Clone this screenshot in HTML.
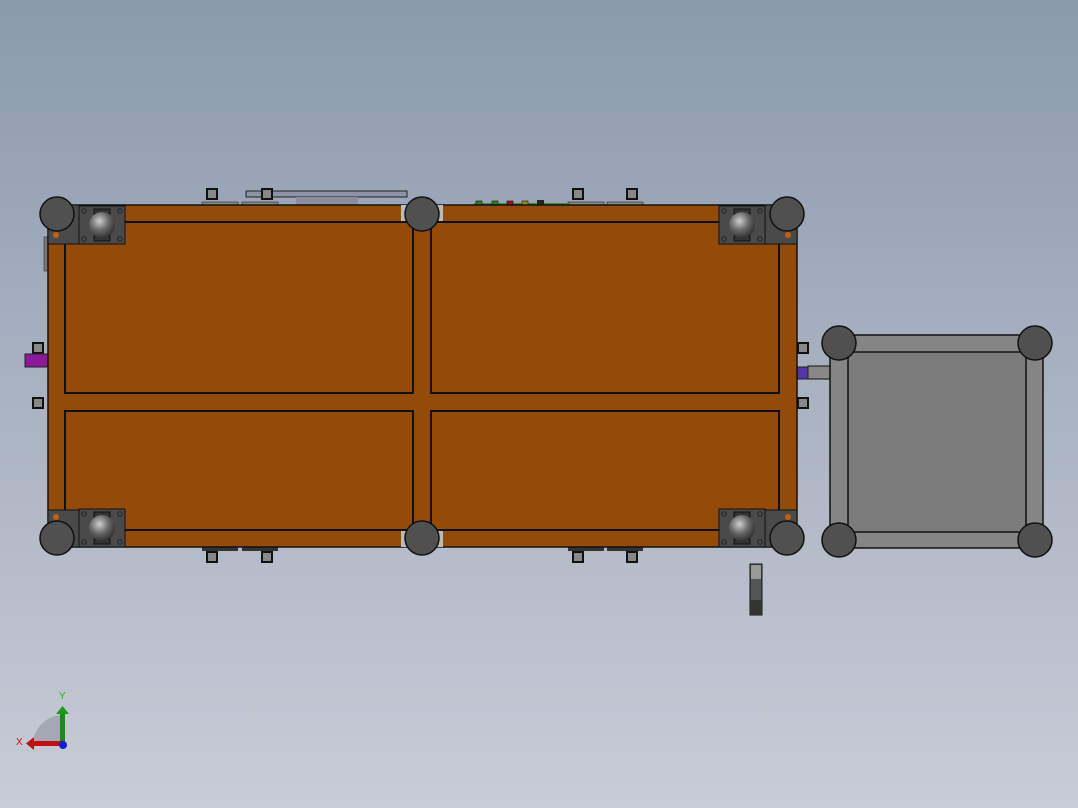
<!DOCTYPE html>
<html><head><meta charset="utf-8"><style>html,body{margin:0;padding:0;width:1078px;height:808px;overflow:hidden}</style></head>
<body>
<svg width="1078" height="808" xmlns="http://www.w3.org/2000/svg">
<defs>
<linearGradient id="bg" x1="0" y1="0" x2="0" y2="1">
<stop offset="0" stop-color="#8b9aae"/><stop offset="1" stop-color="#c8ccd6"/></linearGradient>
<radialGradient id="ball" cx="0.4" cy="0.35" r="0.7"><stop offset="0" stop-color="#cfcfcf"/><stop offset="0.5" stop-color="#6a6a6a"/><stop offset="1" stop-color="#2a2a2a"/></radialGradient>
<g id="plate">
<rect x="0" y="0" width="46" height="38" fill="#4a4a4a" stroke="#111" stroke-width="1"/>
<circle cx="5" cy="5" r="2.2" fill="none" stroke="#222"/><circle cx="41" cy="5" r="2.2" fill="none" stroke="#222"/>
<circle cx="5" cy="33" r="2.2" fill="none" stroke="#222"/><circle cx="41" cy="33" r="2.2" fill="none" stroke="#222"/>
<rect x="15" y="3" width="16" height="5" fill="#333" stroke="#111"/>
<rect x="15" y="30" width="16" height="5" fill="#333" stroke="#111"/>
<circle cx="23" cy="19" r="13" fill="url(#ball)"/>
</g>
<g id="wheel"><circle r="17" fill="#505050" stroke="#111" stroke-width="1.5"/></g>
<g id="tab"><rect x="0" y="0" width="10" height="10" fill="#888" stroke="#111" stroke-width="2"/></g>
</defs>
<rect width="1078" height="808" fill="url(#bg)"/>

<!-- top accessories -->
<rect x="246" y="191" width="161" height="6" fill="#8d94a6" stroke="#222"/>
<rect x="296" y="197" width="62" height="8" fill="#8a8f9e"/>
<rect x="202" y="202" width="36" height="4" fill="#888" stroke="#333" stroke-width="0.7"/>
<rect x="242" y="202" width="36" height="4" fill="#888" stroke="#333" stroke-width="0.7"/>
<rect x="568" y="202" width="36" height="4" fill="#888" stroke="#333" stroke-width="0.7"/>
<rect x="607" y="202" width="36" height="4" fill="#888" stroke="#333" stroke-width="0.7"/>
<use href="#tab" x="207" y="189"/><use href="#tab" x="262" y="189"/>
<use href="#tab" x="573" y="189"/><use href="#tab" x="627" y="189"/>
<rect x="474" y="203" width="96" height="3" fill="#3a8a3a"/>
<rect x="476" y="201" width="6" height="4" fill="#1a8a1a" stroke="#111" stroke-width="0.6"/>
<rect x="492" y="201" width="6" height="4" fill="#1a8a1a" stroke="#111" stroke-width="0.6"/>
<rect x="507" y="201" width="6" height="4" fill="#a81010" stroke="#111" stroke-width="0.6"/>
<rect x="522" y="201" width="6" height="4" fill="#9a8a10" stroke="#111" stroke-width="0.6"/>
<rect x="537" y="200" width="7" height="5" fill="#222"/>

<!-- bottom accessories -->
<rect x="202" y="547" width="36" height="4" fill="#333"/><rect x="242" y="547" width="36" height="4" fill="#333"/>
<rect x="568" y="547" width="36" height="4" fill="#333"/><rect x="607" y="547" width="36" height="4" fill="#333"/>
<use href="#tab" x="207" y="552"/><use href="#tab" x="262" y="552"/>
<use href="#tab" x="573" y="552"/><use href="#tab" x="627" y="552"/>

<!-- side tabs -->
<use href="#tab" x="33" y="343"/><use href="#tab" x="33" y="398"/>
<rect x="25" y="354" width="23" height="13" fill="#8a1a9a" stroke="#222"/>
<use href="#tab" x="798" y="343"/><use href="#tab" x="798" y="398"/>
<rect x="808" y="366" width="22" height="13" fill="#888" stroke="#111"/>
<rect x="797" y="367" width="11" height="12" fill="#5533aa" stroke="#222"/>
<rect x="44" y="237" width="4" height="34" fill="#777" stroke="#333" stroke-width="0.6"/>

<!-- main body -->
<rect x="48" y="205" width="749" height="342" fill="#944a08" stroke="#111" stroke-width="1.5"/>
<g fill="#944a08" stroke="#111" stroke-width="2">
<rect x="65" y="222" width="348" height="171"/>
<rect x="431" y="222" width="348" height="171"/>
<rect x="65" y="411" width="348" height="119"/>
<rect x="431" y="411" width="348" height="119"/>
</g>

<!-- corner plates -->
<rect x="48" y="205" width="32" height="39" fill="#4a4a4a" stroke="#111"/>
<rect x="765" y="205" width="32" height="39" fill="#4a4a4a" stroke="#111"/>
<rect x="48" y="510" width="32" height="37" fill="#4a4a4a" stroke="#111"/>
<rect x="765" y="510" width="32" height="37" fill="#4a4a4a" stroke="#111"/>
<circle cx="56" cy="235" r="3" fill="#c06010"/><circle cx="788" cy="235" r="3" fill="#c06010"/>
<circle cx="56" cy="517" r="3" fill="#c06010"/><circle cx="788" cy="517" r="3" fill="#c06010"/>
<use href="#plate" x="79" y="206"/><use href="#plate" x="719" y="206"/>
<use href="#plate" x="79" y="509"/><use href="#plate" x="719" y="509"/>
<rect x="401" y="205" width="42" height="16" fill="#bbb"/>
<rect x="401" y="531" width="42" height="16" fill="#bbb"/>
<use href="#wheel" x="57" y="214"/><use href="#wheel" x="422" y="214"/><use href="#wheel" x="787" y="214"/>
<use href="#wheel" x="57" y="538"/><use href="#wheel" x="422" y="538"/><use href="#wheel" x="787" y="538"/>

<!-- right cart -->
<rect x="830" y="335" width="213" height="213" fill="#858585" stroke="#111" stroke-width="1.5"/>
<rect x="848" y="352" width="178" height="180" fill="#7b7b7b" stroke="#111" stroke-width="1.5"/>
<use href="#wheel" x="839" y="343"/><use href="#wheel" x="1035" y="343"/>
<use href="#wheel" x="839" y="540"/><use href="#wheel" x="1035" y="540"/>

<!-- small wheel -->
<rect x="750" y="564" width="12" height="51" fill="#555" stroke="#111"/>
<rect x="751" y="565" width="10" height="14" fill="#999"/>
<rect x="751" y="600" width="10" height="14" fill="#333"/>

<!-- triad -->
<path d="M33 745 A30 30 0 0 1 63 715 L63 745 Z" fill="#a4a8b2"/>
<rect x="60" y="713" width="5" height="32" fill="#1a8a1a"/>
<path d="M56 714 L62.5 706 L69 714 Z" fill="#1a9a1a"/>
<rect x="33" y="741" width="30" height="5" fill="#c01010"/>
<path d="M34 737 L26 743.5 L34 750 Z" fill="#c01010"/>
<circle cx="63" cy="745" r="4" fill="#1020d0"/>
<text x="59" y="699" font-family="Liberation Sans, sans-serif" font-size="10" fill="#10c010">Y</text>
<text x="16" y="745" font-family="Liberation Sans, sans-serif" font-size="10" fill="#d01010">X</text>
</svg>
</body></html>
